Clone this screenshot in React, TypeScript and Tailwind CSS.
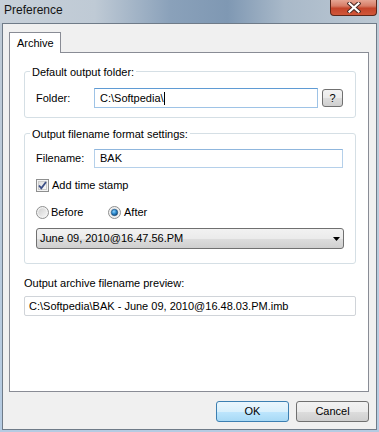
import React from "react";

// --- Small Win7-style controls ---

function CloseGlyph() {
  return (
    <svg width="14" height="11" viewBox="0 0 14 11">
      <path d="M2.5 1.5 L11.5 9.5 M11.5 1.5 L2.5 9.5" stroke="#4a2a24" strokeWidth="4.2" strokeLinecap="square" />
      <path d="M2.5 1.5 L11.5 9.5 M11.5 1.5 L2.5 9.5" stroke="#ffffff" strokeWidth="2.2" strokeLinecap="square" />
    </svg>
  );
}

function CheckBox() {
  return (
    <svg width="13" height="13" viewBox="0 0 13 13">
      <defs>
        <linearGradient id="cbFill" x1="0" y1="0" x2="1" y2="1">
          <stop offset="0" stopColor="#dcdcdc" />
          <stop offset="1" stopColor="#fbfbfb" />
        </linearGradient>
      </defs>
      <rect x="0.5" y="0.5" width="12" height="12" fill="#f4f4f4" stroke="#8e8f8f" />
      <rect x="2.5" y="2.5" width="8" height="8" fill="url(#cbFill)" stroke="#cbcbcb" />
      <path d="M3 6.5 L5.3 9.2 L10 3" fill="none" stroke="#3c4f86" strokeWidth="1.8" />
    </svg>
  );
}

function Radio({ checked }: { checked?: boolean }) {
  return (
    <svg width="13" height="13" viewBox="0 0 13 13">
      <defs>
        <linearGradient id="rdFill" x1="0" y1="0" x2="1" y2="1">
          <stop offset="0" stopColor="#cfcfcf" />
          <stop offset="1" stopColor="#f6f6f6" />
        </linearGradient>
        <radialGradient id="rdDot" cx="0.4" cy="0.35" r="0.7">
          <stop offset="0" stopColor="#8fd2fb" />
          <stop offset="0.5" stopColor="#2c8bd0" />
          <stop offset="1" stopColor="#0d3f6e" />
        </radialGradient>
      </defs>
      <circle cx="6.5" cy="6.5" r="6" fill="#f2f2f2" stroke="#8e8f8f" />
      <circle cx="6.5" cy="6.5" r="4.3" fill="url(#rdFill)" />
      {checked && <circle cx="6.5" cy="6.5" r="3.2" fill="url(#rdDot)" stroke="#1d4f7c" strokeWidth="0.6" />}
    </svg>
  );
}

function GroupBox({ title, children, className }: { title: string; children: React.ReactNode; className?: string }) {
  return (
    <div className={`relative w-[332px] border border-[#d5dfe5] rounded-[3px] ${className ?? ""}`}>
      <span className="absolute left-[5px] top-[-6px] px-[2px] bg-white leading-[13px] text-black">{title}</span>
      {children}
    </div>
  );
}

const grayBtn =
  "border border-[#707070] rounded-[3px] bg-[linear-gradient(to_bottom,#f2f2f2_0%,#ebebeb_50%,#dddddd_51%,#cfcfcf_100%)]";

export default function App() {
  return (
    <div
      className="w-[379px] h-[432px] overflow-hidden bg-[linear-gradient(to_bottom,#bfcad5,#b5cbe2)] text-[11px] text-black"
      style={{ fontFamily: '"Liberation Sans", Arial, sans-serif' }}
    >
      {/* Title bar */}
      <div className="h-[23px] flex justify-between bg-[linear-gradient(to_right,#c7d0d9_0%,#bfcad5_25%,#8aa1ba_45%,#7f98b3_60%,#a9b9c9_75%,#bcc8d3_100%)]">
        <span className="pl-[4px] pt-[3px] text-[12px] leading-[14px] text-[#141414]">Preference</span>
        <button className="mr-[2px] w-[47px] h-[16px] flex items-center justify-center border border-t-0 border-[#5c2619] rounded-b-[4px] bg-[linear-gradient(to_bottom,#e6a593_0%,#d77c66_40%,#c4442a_55%,#d1573a_100%)]">
          <CloseGlyph />
        </button>
      </div>

      {/* Client area */}
      <div className="mx-[2px] h-[407px] border border-[#6f7b88] bg-[#f0f0f0] pt-[8px] pl-[6px] pr-[7px]">
        {/* Tab header */}
        <div className="relative z-10 w-[52px] h-[21px] border border-b-0 border-[#898c95] bg-white pl-[7px] pt-[4px] leading-[13px]">
          Archive
        </div>

        {/* Tab panel */}
        <div className="-mt-px h-[340px] border border-[#898c95] bg-white pt-[18px] pl-[14px]">
          <GroupBox title="Default output folder:" className="pt-[16px] pb-[9px] pl-[11px]">
            <div className="flex items-center">
              <span className="w-[58px] leading-[13px]">Folder:</span>
              <div className="w-[224px] h-[20px] flex items-center border border-[#9ec3e6] border-t-[#5f9bd4] pl-[5px] bg-white">
                <span className="leading-[13px]">{"C:\\Softpedia\\"}</span>
                <span className="w-px h-[13px] bg-black" />
              </div>
              <div className={`ml-[4px] w-[21px] h-[18px] flex items-center justify-center leading-[13px] ${grayBtn}`}>
                ?
              </div>
            </div>
          </GroupBox>

          <GroupBox title="Output filename format settings:" className="mt-[15px] pt-[15px] pb-[14px] pl-[11px]">
            <div className="flex items-center">
              <span className="w-[58px] leading-[13px]">Filename:</span>
              <div className="w-[249px] h-[19px] flex items-center border border-[#b5d0ea] border-t-[#8fb6dd] pl-[5px] bg-white">
                <span className="leading-[13px]">BAK</span>
              </div>
            </div>

            <div className="mt-[11px] h-[13px] flex items-center gap-[3px]">
              <CheckBox />
              <span className="leading-[13px]">Add time stamp</span>
            </div>

            <div className="mt-[14px] h-[13px] flex items-center">
              <div className="w-[72px] flex items-center gap-[2px]">
                <Radio />
                <span className="leading-[13px]">Before</span>
              </div>
              <div className="flex items-center gap-[3px]">
                <Radio checked />
                <span className="leading-[13px]">After</span>
              </div>
            </div>

            <div className={`mt-[9px] w-[308px] h-[21px] flex items-center justify-between pl-[3px] pr-[3px] ${grayBtn}`}>
              <span className="leading-[13px]">June 09, 2010@16.47.56.PM</span>
              <svg width="7" height="4" viewBox="0 0 7 4">
                <path d="M0 0 H7 L3.5 4 Z" fill="#000" />
              </svg>
            </div>
          </GroupBox>

          <div className="mt-[13px] leading-[13px]">Output archive filename preview:</div>
          <div className="mt-[6px] w-[332px] h-[20px] flex items-center border border-[#d0d4d9] rounded-[2px] pl-[4px] bg-white">
            <span className="leading-[13px]">{"C:\\Softpedia\\BAK - June 09, 2010@16.48.03.PM.imb"}</span>
          </div>
        </div>

        {/* Dialog buttons */}
        <div className="mt-[9px] flex justify-end gap-[7px]">
          <button className="w-[73px] h-[21px] leading-[13px] border border-[#3c7fb1] rounded-[3px] bg-[linear-gradient(to_bottom,#eaf6fd_0%,#d9f0fc_50%,#bee6fd_51%,#a7d9f5_100%)]">
            OK
          </button>
          <button className={`w-[73px] h-[21px] leading-[13px] ${grayBtn}`}>Cancel</button>
        </div>
      </div>
    </div>
  );
}
